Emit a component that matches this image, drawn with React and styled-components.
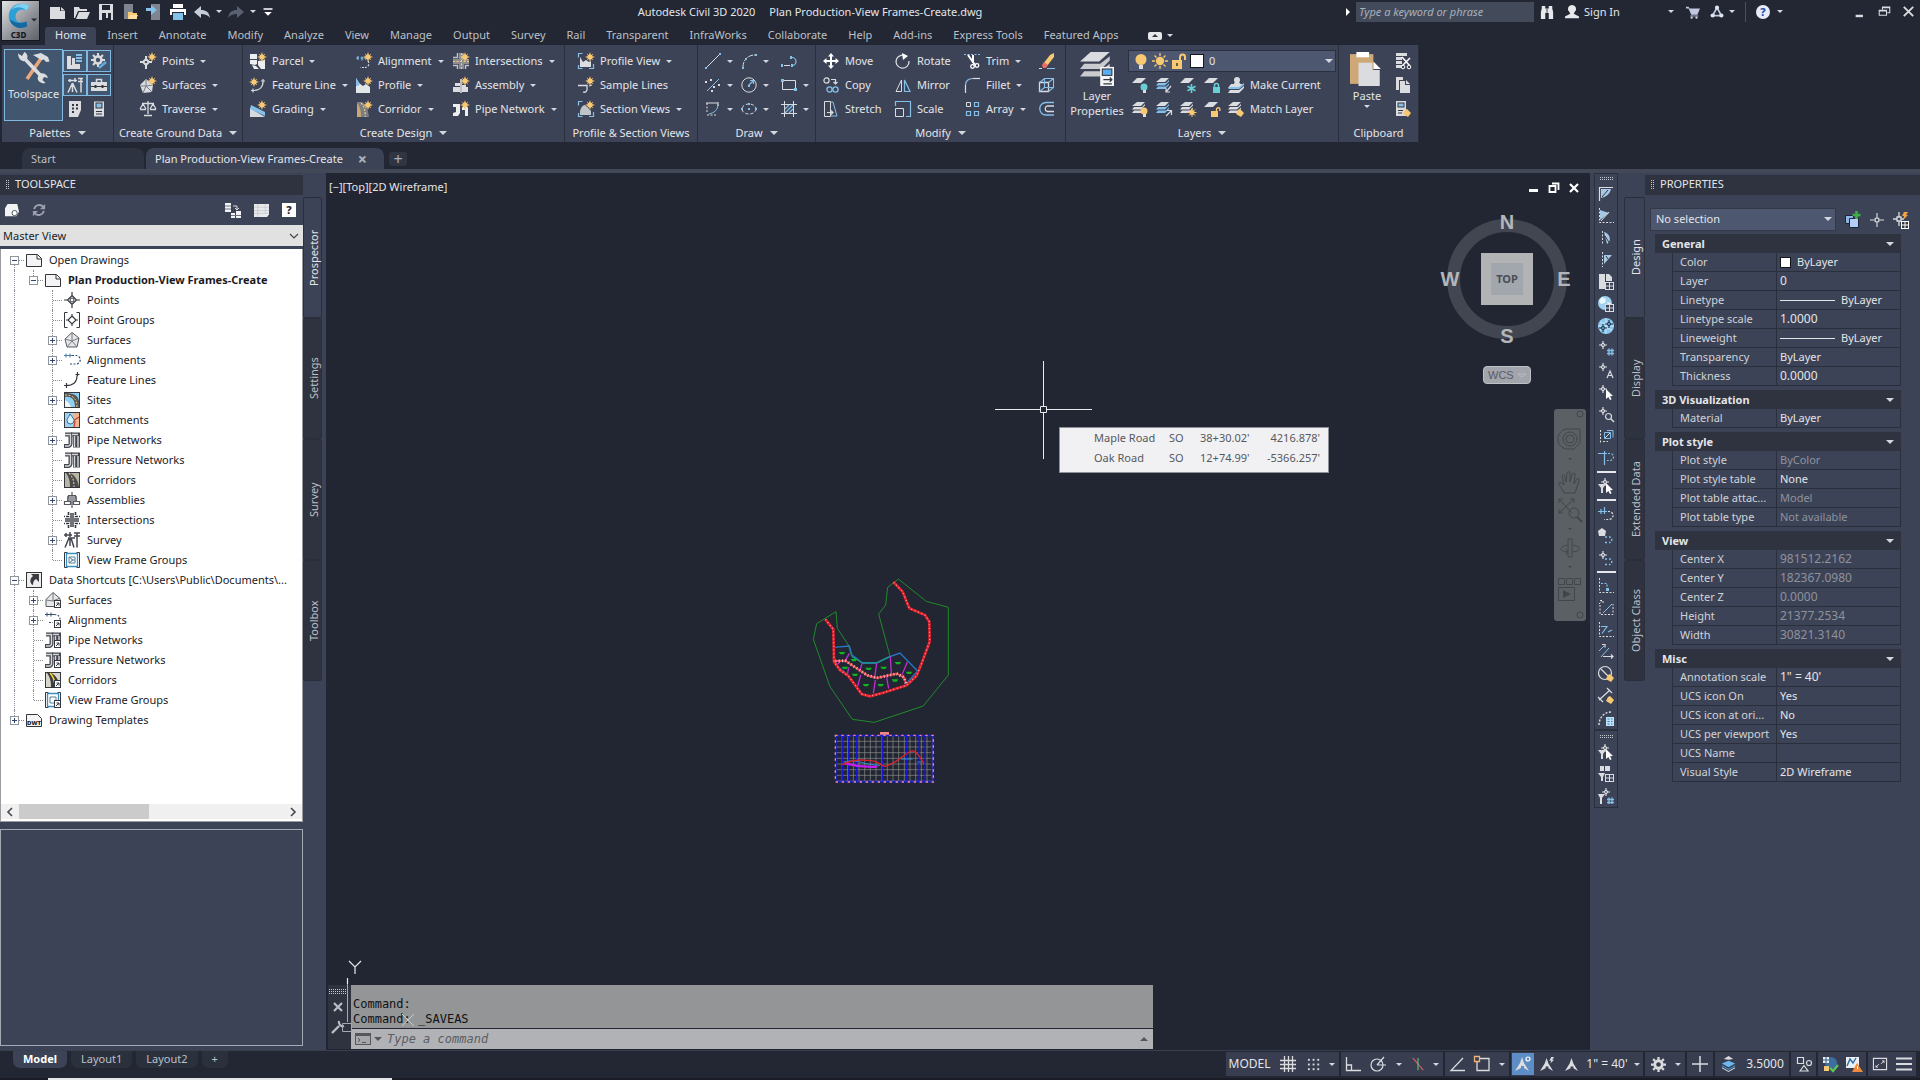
import React from "react";
import styled, { createGlobalStyle, css } from "styled-components";

const c = {
  frame: "#222733",
  canvas: "#222632",
  panel: "#3d4356",
  head: "#2f3340",
  line: "#2a2f3c",
  field: "#4d5870",
  text: "#e3e5e9",
  dim: "#bcc0c8",
  mute: "#8d929d",
  W: "#dadcdf",
  B: "#84c0ea",
  Y: "#f8c873",
  K: "#33363d",
};

const Global = createGlobalStyle`
  *, *::before, *::after { box-sizing: border-box; }
  html, body { margin: 0; background: ${c.frame}; }
  body, button, input, select, table {
    font-family: "Noto Sans", "Open Sans", sans-serif;
    font-size: 11px;
    line-height: 16px;
    color: ${c.text};
  }
  button { background: none; border: 0; padding: 0; text-align: left; white-space: nowrap; }
  ul { list-style: none; margin: 0; padding: 0; }
  svg { display: block; flex: none; overflow: visible; }
`;

/* ---------- icon drawings, 16 x 16 ---------- */
const { W, B, Y, K } = c;
const ln = (d, s = W, w = 1, extra = {}) => (
  <path d={d} fill="none" stroke={s} strokeWidth={w} {...extra} />
);
const fl = (d, f = W) => <path d={d} fill={f} />;
const dash = { strokeDasharray: "2 1.5" };
const spark = (
  <path
    d="M12 -1l1 3 2.300-1.300-1.300 2.300 3 1-3 1 1.300 2.300-2.300-1.300-1 3-1-3-2.300 1.300 1.300-2.300-3-1 3-1-1.300-2.300 2.300 1.300z"
    fill={Y}
  />
);
const shortcut = (
  <>
    <rect x="9.500" y="8.500" width="6" height="7" fill="#fff" stroke={K} />
    {ln("M11 14l3-3M11.500 11h2.500v2.500", K)}
  </>
);
const sheets = (top = W, low = W) => (
  <>
    {fl("M5 1h8l-4 4H0z", top)}
    {fl("M2 6h8l3-3v1.500L9 8.500H0z", low)}
    {fl("M2 9.500h8l3-3V8l-4 4H0z", low)}
  </>
);
const point = (x, y, s = W) => (
  <g transform={`translate(${x} ${y})`}>
    {ln("M-2 0l2-2 2 2-2 2zM0-4v2M0 2v2M-4 0h2M2 0h2", s, 1.2)}
  </g>
);
const tableMark = (
  <>
    <rect x="7.500" y="8.500" width="8" height="7" fill={c.panel} stroke={W} />
    {ln("M7.500 12h8M11.500 8.500v7")}
  </>
);
const pointer = fl("M8 5l7 7-3 .3 1.600 3-1.600.7-1.600-3L8 15z", "#fff");
const pipes = (s) => (
  <>
    {ln("M1 2.500h5.500v9a2.500 2.500 0 0 1-2.500 2.500H0", s, 4)}
    {ln("M7 2.500h7v13", s, 4)}
    {ln("M10.500 4v11.500", s, 3)}
    {ln("M1 2.500h5.500v9a2.500 2.500 0 0 1-2.500 2.500H1M14 4v11M10.500 4v11M8 2.500h6", "#d5d7dc", 1.4)}
  </>
);
const brush = fl("M10 9l2-1 4 4-3 4-5-3z", Y);
const curveMark = ln("M7 9h3M11 9h1a3 3 0 0 1 0 5.500h-1M9 14.500H6", B, 1.3, dash);

const icons = {
  newDoc: fl("M0 3h10v4h5v8H0zM11 3l4 3.500h-4z"),
  open: fl("M0 3h5l1 2h7v2H4L1 14H0zM5 8h11l-3 7H2z"),
  save: (
    <>
      {fl("M1 0h14v16H1z")}
      {fl("M4 1h8v5H4zM4 9h9v7H4z", c.frame)}
      {fl("M8 9h2v5H8z")}
    </>
  ),
  openMobile: (
    <>
      {fl("M2 0h9v15H2z", "#7e8490")}
      {fl("M6 8h4l1 1h4v6H6z", Y)}
      {fl("M8 11h8l-2 4H6z", "#ffdf9f")}
    </>
  ),
  saveMobile: (
    <>
      {fl("M5 0h9v16H5z", "#7e8490")}
      {fl("M0 4h5V1l6 5-6 5V7H0z", B)}
    </>
  ),
  print: (
    <>
      {fl("M3 0h10v4H3z", "#fff")}
      {fl("M0 5h16v6h-2V8H2v3H0z", "#fff")}
      {fl("M3 9h10v7H3z", B)}
    </>
  ),
  undo: fl("M0 8l7-6v4c5 0 8 2 9 8-2-3-5-4-9-4v4z", "#c6ccd8"),
  redo: fl("M16 8L9 2v4C4 6 1 8 0 14c2-3 5-4 9-4v4z", "#596072"),
  custom: fl("M2 3h12v2H2zM3 8h10l-5 5z", "#fff"),
  binoc: (
    <>
      {fl("M2 1h4v3h4V1h4v3l1 4v8h-5V9H6v7H1V8l1-4z", "#e6e8ec")}
      {ln("M8 4v5", c.frame)}
    </>
  ),
  user: fl("M8 0a4.500 4.500 0 0 1 3 8l-1 2 6 3v2H0v-2l6-3-1-2a4.500 4.500 0 0 1 3-8z", "#e6e8ec"),
  cart: (
    <>
      {fl("M0 2h3l1 2h12l-3 7H6L3 4H0z", "#c2c9e0")}
      {ln("M5 12.500h9", "#c2c9e0")}
      <circle cx="6.500" cy="14.500" r="1.300" fill={W} />
      <circle cx="12" cy="14.500" r="1.300" fill={W} />
    </>
  ),
  a360: (
    <>
      {ln("M8 3L3 12h10z", "#c2c9e0", 2)}
      {[[8, 3], [3, 12], [13, 12]].map(([x, y]) => (
        <circle key={x} cx={x} cy={y} r="2.400" fill="#dfe3ef" />
      ))}
    </>
  ),
  min: fl("M2 12h9v3H2z", W),
  restore: ln("M5.500 5.500v-3h9v7h-3M1.500 6.500h9v6h-9zM1 7.500h9M5 3.500h9", W, 1.3),
  close: ln("M3 3l10 10M13 3L3 13", W, 2),

  toolspace: (
    <>
      {ln("M12 2.500L4.500 13.500", "#e9a679", 1.8)}
      {fl("M7.500 1.500l4-1 3.500 2 .8 2.200-1.800.3-1-1.300-1.300.3z")}
      {ln("M3 3l9 9.500", W, 1.8)}
      {fl("M0 .8l2 1.200L3.200 0C5 .8 5.200 3 4 4.200 2.500 5.200.2 4.200 0 .8zM10.500 11c1.700-1 4 0 4.500 2l-2-.5-.8 1.500 1.600 1.500c-2 .6-4-.8-4-2.500z")}
    </>
  ),
  prospector: (
    <>
      {fl("M0 3h4v9h5v4H0z")}
      {fl("M5 5h3v6h5v5H5z")}
      {fl("M9 1h6v2H9zM9 4h6v2H9zM9 7h6v2H9z", B)}
    </>
  ),
  gear: (
    <>
      <circle cx="8" cy="8" r="4" fill="none" stroke={W} strokeWidth="3" />
      {ln("M8 0v3M8 13v3M0 8h3M13 8h3M2.300 2.300l2 2M11.700 11.700l2 2M13.700 2.300l-2 2M4.300 11.700l-2 2", W, 2.4)}
    </>
  ),
  gearTool: (
    <>
      <circle cx="7" cy="7" r="3.500" fill="none" stroke={W} strokeWidth="2.600" />
      {ln("M7 0v3M7 11v3M0 7h3M11 7h3M2 2l2 2M12 2l-2 2M4 10l-2 2", W, 2)}
      {ln("M8 15l7-6", "#5fa9df", 2.4)}
    </>
  ),
  survey: ln("M1 3.500h9M3 2v3M8 1v4M5.500 6L1 15.500M5.500 6v9M5.500 6L10 15.500M14 2v13.500M11 1.500h5M11 4.500h5", W, 1.5),
  toolbox: (
    <>
      {ln("M5.500 5V2.500h5V5", W, 1.5)}
      {fl("M0 5h16v9H0z")}
      {ln("M0 9.500h16", K)}
      {ln("M4.500 8v3M11.500 8v3", K, 2)}
    </>
  ),
  sheetSet: (
    <>
      {fl("M2 0h12v9l-3 7H2z")}
      {ln("M5 4h2M9 4h2M5 7.500h2M9 7.500h2M5 11h2", K, 2)}
    </>
  ),
  design: (
    <>
      <rect x="3" y=".5" width="10" height="15" fill={W} />
      <rect x="5" y="2" width="6" height="5" fill={B} stroke={K} />
      {ln("M5 10.500h6M5 13h6", K, 1)}
    </>
  ),
  points: (
    <>
      {ln("M6 6l3 3-3 3-3-3zM6 3v3M6 12v4M0 9h3M9 9h3", W, 2)}
      {spark}
    </>
  ),
  surfaces: (
    <>
      {fl("M6 2l7 6-1 7-9 1-3-8z")}
      {ln("M6 2v7l-6 0M6 9l6 6M6 9l-3 7M6 9l7-1", "#777c88", 1)}
      {spark}
    </>
  ),
  traverse: ln("M8 0v13M4 14.500h8M2 2.500h12M0 8.500h6M10 8.500h6M0 8l3-5 3 5M10 8l3-5 3 5", W, 1.3),
  parcel: (
    <>
      {fl("M0 1h7v5H0zM0 7h7v4l-2 1-5-1zM8 8l7-1v9h-4l-3-4zM2 12l4 1 3 3H4z", "#eceef0")}
      {spark}
    </>
  ),
  feature: (
    <>
      {ln("M3 13.500c6 0 10-3 10-9M1 13.500h3M3 11.500v4M13 2v4M11 4h4", W, 1.2)}
      <g transform="translate(-8 1)">{spark}</g>
    </>
  ),
  grading: (
    <>
      {fl("M0 7v9h15z", "#d6dadd")}
      {fl("M1 4l14 7v4L0 8z", B)}
      {spark}
    </>
  ),
  alignment: (
    <>
      {ln("M0 5h3M4.500 5h3M2 3v4M6 3.500v4M8 5h4", B, 1.2)}
      {ln("M12 8a4 4 0 0 1-3 6.500M8 14.500H4", W, 1.2, dash)}
      {spark}
    </>
  ),
  profile: (
    <>
      {fl("M0 1l3 5 4 3 3-2 4 3v6H0z", "#e1e6ea")}
      {fl("M0 1l4 6-2 2-2 0z", B)}
      {spark}
    </>
  ),
  corridor: (
    <>
      {fl("M1 1h5c5 3 6 8 7 15H3z", "#7a7d82")}
      {fl("M1 2c3 3 4 8 4 14H1z", "#c8a773")}
      {ln("M5 2c4 4 4 8 4.500 14", Y, 1.2, dash)}
      {spark}
    </>
  ),
  intersections: (
    <>
      {fl("M6 0h5v16H6zM0 6h16v5H0z", "#8b8d91")}
      {ln("M8.500 0v16M0 8.500h16", Y, 1, dash)}
      {ln("M4.500 0v4.500H0M12.500 16v-3.500H16M4.500 16v-3.500H0", "#bfc2c6", 1.5)}
      {spark}
    </>
  ),
  assembly: (
    <>
      {fl("M0 10h7v5H0zM9 10h6v5H9zM2 6h5v3H2zM9 8h4v2H9z")}
      {ln("M8 2v14", "#fff", 1.3)}
      {spark}
    </>
  ),
  pipe: (
    <>
      {fl("M0 3h7v9l-2 3H0v-3l3-1V6H0zM9 6h6v9h-3V9H9z", "#eceef0")}
      {spark}
    </>
  ),
  profileView: (
    <>
      {ln("M.5 4.500v-4h4M.5 12v3.500h4M11 15.500h4.500V11", B, 1.2)}
      {fl("M2 4l3 5 3-2 3 2 2-1v6H2z")}
      {spark}
    </>
  ),
  sampleLines: (
    <>
      {ln("M0 8.500h5M2 8.500h7v3a3 3 0 0 1-4 3.500M14 8l-3 1", W, 1.3)}
      {spark}
    </>
  ),
  sectionViews: (
    <>
      {ln("M.5 4.500v-4h4M.5 12v3.500h4M11 15.500h4.500V11", B, 1.2)}
      {fl("M2 10c1-4 3-6 5-6l6 6v4H2z", "#bfc3ca")}
      {spark}
    </>
  ),
  line: (
    <>
      {ln("M2 14L14 2")}
      {fl("M0 14h2v2H0zM14 0h2v2h-2z", B)}
    </>
  ),
  arc: (
    <>
      {ln("M2 14C2 7 7 2 14 2", W, 1, { strokeDasharray: "5 1" })}
      {fl("M1 14h2v2H1zM4 5h2v2H4zM14 1h2v2h-2z", B)}
    </>
  ),
  polyline: (
    <>
      {ln("M3 12.500h6", W)}
      {ln("M11 12.500a4 4 0 0 0 0-8", B, 1.2)}
      {fl("M0 11h2v3H0zM10 11h2v3h-2zM9 3h2v3H9z", B)}
    </>
  ),
  lineCreate: (
    <>
      {ln("M2 14L14 2", B)}
      {fl("M0 4h2v2H0zM5 2h2v2H5zM8 9h2v2H8zM13 7h2v2h-2zM6 13h2v2H6z")}
    </>
  ),
  circle: (
    <>
      <circle cx="8" cy="8" r="7.200" fill="none" stroke={W} />
      {ln("M7 9l5-5M9 3.500h3.500V7", B, 1.2)}
      {fl("M7 8h2v2H7z", B)}
    </>
  ),
  rect: (
    <>
      {ln("M1.500 3.500h13v9h-13z")}
      {fl("M0 2h3v3H0zM13 11h3v3h-3z", B)}
    </>
  ),
  curve: (
    <>
      {ln("M2 2v10M2 14h9", W, 1, dash)}
      {ln("M13 3c0 6-4 9-9 10", B)}
      {ln("M1 2h12M13 1v4", W)}
    </>
  ),
  ellipse: (
    <>
      <ellipse cx="8" cy="8" rx="7" ry="5" fill="none" stroke={W} strokeDasharray="3 2" />
      {fl("M7 7h2v2H7zM0 7h2v2H0zM14 7h2v2h-2zM7 2h2v2H7z", B)}
    </>
  ),
  hatch: (
    <>
      {ln("M3.500 0v16M12.500 0v16M0 3.500h16M0 12.500h16")}
      {ln("M4 8l4-4M4 12l8-8M8 12l4-4", B, 1.3)}
    </>
  ),
  move: fl("M8 0l3 3.500H9V7h3.500V5L16 8l-3.500 3V9H9v3.500h2L8 16l-3-3.500h2V9H3.500v2L0 8l3.500-3v2H7V3.500H5z", "#fff"),
  copy: (
    <>
      <circle cx="3.500" cy="3.500" r="2.600" fill="none" stroke={W} strokeWidth="1.200" />
      {ln("M8 2.500h4.500V7M10.500 5l2 2 2-2", W, 1.2)}
      <circle cx="6.500" cy="12.500" r="2.600" fill="none" stroke={B} strokeWidth="1.300" />
      <circle cx="12.500" cy="12.500" r="2.600" fill="none" stroke={B} strokeWidth="1.300" />
    </>
  ),
  stretch: (
    <>
      {ln("M1.500.500h6v15h-6z")}
      {ln("M8 1h2l4 14H8", B)}
      {ln("M4 11.500h6M8 9.500l2 2-2 2", W, 1.2)}
    </>
  ),
  rotate: (
    <>
      {ln("M11.500 3.500A6.500 6.500 0 1 0 14 8", W, 1.3)}
      {fl("M7 0l6 3-5 4z", "#fff")}
    </>
  ),
  mirror: (
    <>
      {ln("M1 14.500h5.500V3z")}
      {ln("M9.500 3v11.500H15z", B, 1.2)}
    </>
  ),
  scale: (
    <>
      {ln("M.5 5V.500h15v15H11", B, 1.2)}
      {ln("M.5 7.500h8v8h-8z")}
    </>
  ),
  trim: (
    <>
      {ln("M0 1.500h16", B, 1, dash)}
      {ln("M4 2l7 10M9 2v8", "#fff", 2)}
      <circle cx="8.500" cy="13.500" r="1.800" fill="none" stroke="#fff" strokeWidth="1.300" />
      <circle cx="13" cy="12.500" r="1.800" fill="none" stroke="#fff" strokeWidth="1.300" />
    </>
  ),
  fillet: (
    <>
      {ln("M1.500 16V8", W, 1.2)}
      {ln("M1.500 8c0-4 3-6.500 7-6.500", B, 1.2)}
      {ln("M8.500 1.500H16", W, 1.2)}
    </>
  ),
  array: (
    <>
      {ln("M2.500 1.500h4v4h-4z")}
      {ln("M10.500 1.500h4v4h-4zM2.500 10.500h4v4h-4zM10.500 10.500h4v4h-4z", B, 1.2)}
    </>
  ),
  erase: (
    <>
      {fl("M15 0v4L8 13l-4-2 7-9z", Y)}
      {fl("M5 9l4 3-2 3H4l-1-3z", "#ef6a63")}
      {ln("M0 15.500h3", W)}
      {ln("M8 15.500h8", B)}
    </>
  ),
  explode: (
    <>
      {ln("M.5 5.500h9v9h-9z", W, 1.3)}
      {ln("M.5 5.500l5-4h9v9l-5 4M9.500 5.500l5-4M5.500 1.500v9h9M.5 14.500l5-4", B, 1.1)}
    </>
  ),
  offset: (
    <>
      {ln("M15 1.500H7a6 6 0 0 0 0 12.500h8", B, 1.3)}
      {ln("M15 5H8a3 3 0 0 0 0 5.500h7", W, 1.3)}
    </>
  ),
  layerProps: (
    <>
      {fl("M5 0h9l-5 4.500H0z")}
      {fl("M2 5.500h7.500L14 2v2L10 8H0z", "#c9cbce")}
      {fl("M2 9h7.500L14 5.500v2L10 11.500H0z", "#c9cbce")}
      <rect x="9.500" y="7" width="6.500" height="9" fill="#f4f5f6" />
      <rect x="10.500" y="8" width="4.500" height="3" fill="#59aef0" stroke={K} strokeWidth=".500" />
      {ln("M11 13h4M14 12l1 1-1 1M15 15h-4", K, 0.6)}
    </>
  ),
  bulb: (
    <>
      <circle cx="8" cy="6.500" r="5.500" fill={Y} />
      {fl("M6 12h4v4H6z", W)}
    </>
  ),
  sun: (
    <>
      <circle cx="8" cy="8" r="4.200" fill={Y} />
      {ln("M8 0v3M8 13v3M0 8h3M13 8h3M2.500 2.500l2 2M11.500 11.500l2 2M13.500 2.500l-2 2M4.500 11.500l-2 2", Y, 1.3)}
    </>
  ),
  unlock: (
    <>
      {fl("M1 7h10v9H1z", Y)}
      {ln("M9 7V4a2.500 2.500 0 0 1 5 0v3", Y, 2)}
      {ln("M6 10v3", K, 1.5)}
    </>
  ),
  layOff: (
    <>
      {fl("M5 1h9L9 6H0z")}
      <circle cx="12" cy="10" r="3.500" fill="#68cfd4" />
      {fl("M11 13h3v3h-3z")}
    </>
  ),
  layIso: (
    <>
      {sheets(W, B)}
      {ln("M15 9l-5 6M10 11v4h4", W, 1.2)}
    </>
  ),
  layFreeze: (
    <>
      {fl("M5 1h9L9 6H0z")}
      {ln("M11.500 7v9M7.500 9.300l8 4.500M15.500 9.300l-8 4.500", "#68cfd4", 1.6)}
    </>
  ),
  layLock: (
    <>
      {fl("M5 1h9L9 6H0z")}
      {fl("M9 10h7v6H9z", "#68cfd4")}
      {ln("M10.500 10V8.500a2 2 0 0 1 4 0V10", "#68cfd4", 1.5)}
    </>
  ),
  makeCurrent: (
    <>
      {fl("M3 7h12l-4 4H0z", W)}
      {fl("M2 10h9l5-4v2l-5 4H0z", B)}
      {fl("M2 13h9l5-4v2l-5 5H0z", W)}
      <circle cx="9" cy="3" r="3" fill={W} />
      {fl("M5 8l2-3h4l2 3z")}
    </>
  ),
  layOn: (
    <>
      {sheets()}
      <circle cx="12" cy="10" r="3.500" fill={Y} />
      {fl("M11 13h3v3h-3z")}
    </>
  ),
  layUniso: (
    <>
      {sheets(W, B)}
      {ln("M10 15l5-5M11 9.500h4.500V14", W, 1.2)}
    </>
  ),
  layThaw: (
    <>
      {sheets()}
      <circle cx="12" cy="11.500" r="2.500" fill={Y} />
      {ln("M12 7v9M7.500 11.500h9M9 8.500l6 6M15 8.500l-6 6", Y, 1)}
    </>
  ),
  layUnlock: (
    <>
      {fl("M5 1h9L9 6H0z")}
      {fl("M7 10h7v6H7z", Y)}
      {ln("M12.500 10V8.500a1.700 1.700 0 0 1 3.400 0V10", Y, 1.4)}
    </>
  ),
  matchLayer: (
    <>
      {sheets()}
      {brush}
    </>
  ),
  paste: (
    <>
      {fl("M0 1h11v14H0z", "#cfa877")}
      {fl("M3 0h6v2.500H3z", "#fff")}
      {fl("M4 5h6.500v3.500H14V16H4z")}
      {fl("M11 4.500L14.500 8H11z", "#fff")}
    </>
  ),
  cut: (
    <>
      {fl("M1 0h11v3H1zM1 4h6v3H1zM1 8h6v3H1zM1 12h6v3H1z")}
      {ln("M7 4l8 9M15 5l-8 8", "#fff", 1.5)}
      <circle cx="8" cy="14" r="1.800" fill={c.panel} stroke="#fff" />
      <circle cx="14" cy="14" r="1.800" fill={c.panel} stroke="#fff" />
    </>
  ),
  copyClip: (
    <>
      {fl("M1 0h7v3H4v10H1z")}
      {fl("M5 4h5v4h5v8H5zM11 3l4 4h-4z")}
    </>
  ),
  matchProp: (
    <>
      <rect x="1" y="0" width="10" height="15" fill={W} />
      <rect x="3" y="2" width="6" height="4" fill={B} stroke={K} />
      {ln("M3 9.500h5M3 12h4", K)}
      {brush}
    </>
  ),

  tsNew: (
    <>
      {fl("M3 1h11l2 9-3 5H0V6z", "#f2f3f4")}
      <circle cx="11" cy="11.500" r="3" fill="#fff" stroke={c.panel} />
    </>
  ),
  refresh: (
    <>
      {ln("M2.500 7A6 6 0 0 1 13 4.500M13.500 9A6 6 0 0 1 3 11.500", "#9ba0ab", 2.2)}
      {fl("M15 1v6H9zM1 15V9h6z", "#9ba0ab")}
    </>
  ),
  tsTree: (
    <>
      {fl("M0 1h6v9H0zM6 11h4v5H6zM11 9h5v7h-5z", "#f2f3f4")}
      {ln("M0 4h6M0 7h6M6 13.500h10", "#6f7482")}
      {ln("M8 4h4v4M10 6l2 2 2-2", W)}
    </>
  ),
  tsPano: (
    <>
      {fl("M0 1h16v11l-2 3H0z", "#e8e9eb")}
      {ln("M0 4.500h16M0 8h16M0 11h16M4 1v14M12 1v10", "#bfc3c9", 0.7)}
    </>
  ),
  doc: (
    <>
      <path d="M.5 2.500h11l4 4v8H.5z" fill="#f4f4f5" stroke={K} />
      {ln("M11 2.500v4.500h4.500", K)}
    </>
  ),
  tPoint: (
    <>
      {ln("M8 3.500l4.500 4.500-4.500 4.500-4.500-4.500zM8 0v4M8 12v4M0 8h4M12 8h4", K, 1.2)}
      <circle cx="8" cy="8" r="2" fill="#fff" stroke={K} />
    </>
  ),
  tPointGroup: (
    <>
      {ln("M3.500.500h-3v15h3M12.500.500h3v15h-3", K)}
      {ln("M8 4l4 4-4 4-4-4zM8 2v3M8 11v3M2 8h3M11 8h3", K, 1.2)}
    </>
  ),
  tSurface: (
    <>
      <path d="M8 .5l7 5.500-2 9H3L1 7z" fill="#e6e7e9" stroke="#55585f" />
      {ln("M8 .5V9M1 7l7 2 7-3M3 15l5-6 5 6", "#777b83")}
    </>
  ),
  tAlign: (
    <>
      {ln("M0 3.500h8M2 1.500v4M6 1.500v4", "#4c7ea9", 1)}
      {ln("M8 3.500h4a4 4 0 0 1 0 8.500H5", "#38506a", 1.2, dash)}
    </>
  ),
  tFeature: ln("M2 13.500c7 0 11-3 11-10M0 13.500h4M2.500 11v5M13.500 0v4M11.500 2.500h4", K, 1.2),
  tSites: (
    <>
      <rect x=".5" y=".5" width="15" height="15" fill="#8fd0f2" stroke={K} />
      {fl("M1 5c7-1 10 3 10 10h4V9C14 3 9 1 1 1z", "#55575a")}
      {ln("M1 3c8 0 12 4 12 12", Y, 1, dash)}
      {fl("M1 8l4 3 2 4H1z", "#f2f3f4")}
    </>
  ),
  tCatch: (
    <>
      <rect x=".5" y=".5" width="15" height="15" fill="#9fd4f0" stroke={K} />
      {fl("M9 1h6v14H9l1-5-2-2z", "#f0b48f")}
      {ln("M9 9l6-4M11 9l-1 6", "#c8422f", 1.3)}
      <path d="M6 2c3 4 4 5 4 6.500a3.500 3.500 0 0 1-7 0C3 7 4 6 6 2z" fill="#d9f0fc" stroke="#2a6d9c" />
    </>
  ),
  tPipe: pipes("#43464d"),
  tPipeS: (
    <>
      {pipes("#43464d")}
      {shortcut}
    </>
  ),
  tCorr: (
    <>
      <rect x=".5" y=".5" width="15" height="15" fill="#b9b6a6" stroke={K} />
      {fl("M2 1h4c6 3 8 8 9 14H6C6 9 5 5 2 1z", "#4a4c50")}
      {ln("M5 1c4 4 5 8 5 14", Y, 1.1, dash)}
    </>
  ),
  tCorrS: (
    <>
      <rect x=".5" y=".5" width="15" height="15" fill="#d8d6c8" stroke={K} />
      {fl("M2 1h4c6 3 8 8 9 14H6C6 9 5 5 2 1z", "#3c3e42")}
      {ln("M5 1c4 4 5 8 5 14", "#ffd728", 1.6)}
      {shortcut}
    </>
  ),
  tAssembly: (
    <>
      {fl("M3 4h4v6H3zM9 4h4v6H9z", "#9a9da3")}
      {ln("M8 0v16M3.500 9.500l1-6h7l1 6M.5 9.500h6v3h-6zM9.500 9.500h6v3h-6z", "#55585f", 1.2)}
    </>
  ),
  tInter: (
    <>
      {fl("M6 1h4v5h5v4h-5v5H6v-5H1V6h5z", "#6f7277")}
      {ln("M4.500 0v4.500H0M11.500 0v4.500H16M4.500 16v-4.500H0M11.500 16v-4.500H16", K, 1.6, { strokeDasharray: "3 1" })}
    </>
  ),
  tSurvey: ln("M0 3h8M2 1v4M6 0v5M4 6h7M5 6L1 15.500M6 6v8M7 6l3 9.500M13 1v14.500M10 1h6M10 4h6", "#44474e", 1.5),
  tView: (
    <>
      {ln("M3.500.500h-3v15h3M12.500.500h3v15h-3", K)}
      {ln("M2.500 1.500h11v13h-11z", "#3e8fc1", 1.3)}
      {ln("M5 5h6v6H5zM5 5l4 3-4 3M7 8h4", "#5d7f98", 1)}
    </>
  ),
  tViewS: (
    <>
      {ln("M3.500.500h-3v15h3M12.500.500h3v15h-3", K)}
      {ln("M2.500 1.500h11v13h-11z", "#3e8fc1", 1.3)}
      {ln("M5 5h6v6H5z", "#5d7f98", 1)}
      {shortcut}
    </>
  ),
  tShort: (
    <>
      <rect x=".5" y=".5" width="15" height="15" fill="#eee" stroke="#333" />
      {fl("M5 2h8v8l-3-3c-2 1-3 3-3 6-3-1-4-6 0-9z", "#3a3c41")}
    </>
  ),
  tSurfaceS: (
    <>
      <path d="M8 .5l7 6v8H1v-7z" fill="#e6e7e9" stroke="#55585f" />
      {ln("M8 .5V9M1 8l7 1 7-3", "#777b83")}
      {shortcut}
    </>
  ),
  tAlignS: (
    <>
      {ln("M0 2.500h9M2 .5v4M6 .5v4", "#38506a", 1)}
      {ln("M9 2.500c4 0 6 2 6 5M4 10.500h4", "#38506a", 1.2, dash)}
      {shortcut}
    </>
  ),
  tDwt: (
    <>
      <path d="M.5 2.500h11l4 4v8H.5z" fill="#f4f4f5" stroke={K} />
      <text x="8" y="13" textAnchor="middle" fontSize="6" fontWeight="800" fill="#111">DWT</text>
    </>
  ),

  rCorner: (
    <>
      {ln("M1.500 15V1.500H15", W, 1.2)}
      {fl("M3 3h10c-1 5-5 8-10 9z", "#a5c9e4")}
      {ln("M4 11l6-7", K)}
    </>
  ),
  rAngle: (
    <>
      {ln("M1.500 0v14.500H16", W, 1, dash)}
      {fl("M2 2l9 3-9 7z", "#a5c9e4")}
      {ln("M3 13L11 4", W)}
    </>
  ),
  rArcL: (
    <>
      {ln("M4.500 1v14", W, 1, dash)}
      {fl("M6 2c6 1 8 9 3 12z", "#a5c9e4")}
      {ln("M7 6l5 8", K, 1)}
    </>
  ),
  rWedge: (
    <>
      {ln("M4.500 0v15", W, 1, dash)}
      {fl("M6 3h8L6 12z", "#a5c9e4")}
      {ln("M8 4l2 3", K)}
    </>
  ),
  rSheet: (
    <>
      {fl("M1 0h6v15H1zM8 0h3l3 3v4H8z")}
      {tableMark}
    </>
  ),
  rGlobeT: (
    <>
      <circle cx="7" cy="7" r="7" fill="#9fd0f0" />
      {fl("M4 1l4 2-1 4-4 1-2-3zM9 6l4 1-2 4z", "#e9f6fd")}
      {tableMark}
    </>
  ),
  rGlobe: (
    <>
      <circle cx="8" cy="8" r="8" fill="#8cc8ec" />
      {ln("M8 0v16M0 8h16M2 4c4 2 8 2 12 0M2 12c4-2 8-2 12 0", "#d5ecfa", 0.8)}
      {point(5, 10, "#1f3a55")}
      {point(11, 6, "#1f3a55")}
    </>
  ),
  rPtGrid: (
    <>
      {point(5, 5)}
      {ln("M9 10.500h7M9 13.500h7M11 8.500v7M14 8.500v7", B, 1.3)}
    </>
  ),
  rPtA: (
    <>
      {point(5, 5)}
      {ln("M9 16l3-7 3 7M10 13.500h4", W, 1.2)}
    </>
  ),
  rPtSel: (
    <>
      {point(5, 5)}
      {pointer}
    </>
  ),
  rPtZoom: (
    <>
      {point(5, 5)}
      <circle cx="10.500" cy="10.500" r="3" fill="none" stroke={W} strokeWidth="1.200" />
      {ln("M13 13l3 3", W, 1.4)}
    </>
  ),
  rSel: (
    <>
      {ln("M2.500 2v13M5 13.500h5", W, 1, dash)}
      {ln("M6.500 4.500h6v6h-6zM9 2.500h6v7", B)}
      {ln("M7 10l5-5", W)}
    </>
  ),
  rProf: (
    <>
      {ln("M0 3.500h9M6.500 1v14", B, 1.2)}
      {ln("M10 3.500h2a3.500 3.500 0 0 1 0 7H9", B, 1.2, dash)}
    </>
  ),
  rFilter: (
    <>
      {fl("M0 6h8l-3 4v5H3v-5z")}
      {point(7, 4)}
      {pointer}
    </>
  ),
  rCurve: (
    <>
      {ln("M0 5.500h9M3 3v5M6.500 1v7", B, 1.2)}
      {ln("M10 5.500h1a4 4 0 0 1 0 8H6", W, 1.2, dash)}
    </>
  ),
  rSurfC: (
    <>
      {fl("M4 0l4 3-1 5H1L0 3z")}
      {curveMark}
    </>
  ),
  rPtC: (
    <>
      {point(5, 5)}
      {curveMark}
    </>
  ),
  rD1: (
    <>
      {ln("M1.500 0v14.500H16", W, 1, dash)}
      {ln("M3 5.500h6v6", B, 1.2, dash)}
      {fl("M8 10h3v3H8z", B)}
    </>
  ),
  rD2: (
    <>
      {ln("M2 5v9.500h13V4M1 4l3-3M2 .5h3v3", W, 1, dash)}
      {ln("M5 13l9-9", B)}
    </>
  ),
  rD3: (
    <>
      {ln("M1.500 0v14.500H16", W, 1, dash)}
      {ln("M3 4.500h6l-5 7M10 10l4-2", B, 1.1)}
    </>
  ),
  rD4: (
    <>
      {ln("M1 7l5-5M3 13L11 4", B)}
      {ln("M5 12.500h10M13 10.500l2 2-2 2M4 .5h3v3", W, 1.2)}
    </>
  ),
  rD5: (
    <>
      <circle cx="7" cy="7" r="6.500" fill="none" stroke={W} strokeWidth="1.200" />
      {ln("M3 3l7 7", W, 1.2)}
      {brush}
    </>
  ),
  rD6: (
    <>
      {ln("M1 12L12 2M0 9l5 5M9 0l5 5", W, 1.2)}
      {brush}
    </>
  ),
  rD7: (
    <>
      {ln("M1 15C1 8 6 2 13 2", W, 1.4, dash)}
      {fl("M8 7h8v9H8z", "#bfe2f7")}
      {ln("M9.500 9h5M9.500 11.500h5M9.500 14h5", "#2f7fb5", 1, dash)}
    </>
  ),
  rF2: (
    <>
      {fl("M2 0h4v5H2zM7 0h5v5H7zM0 7h7l-2 4v4H3v-4z")}
      {tableMark}
    </>
  ),
  rF3: (
    <>
      {fl("M0 6h7l-3 4v6H2v-6z")}
      {point(8, 4)}
      {ln("M9 11.500h7M9 14.500h7M11 9.500v6.500M14 9.500v6.500", B, 1.3)}
    </>
  ),

  pickAdd: (
    <>
      <path d="M.5 3.500h8v8h-8z" fill="#8fb3e2" stroke="#1d2638" />
      <path d="M4.500 6.500h9v9h-9z" fill="#b4cdf2" stroke="#1d2638" />
      {ln("M11.500-1v8M7.500 3h8", "#3fae45", 2.6)}
    </>
  ),
  pickObj: ln("M8 0v6M8 10v6M0 8h6M10 8h6M6 6h4v4H6z", W, 1.3),
  quickSel: (
    <>
      {ln("M6 0v5M6 9v5M0 7h4M8 7h3M4 5h4v4H4z", W, 1.3)}
      {fl("M11 0h4l-2 3h2l-5 5 1-4H9z", "#f4a340")}
      <rect x="8.500" y="9.500" width="7" height="7" fill={K} stroke="#fff" />
      {ln("M8.500 13h7M12 9.500v7", "#fff")}
    </>
  ),

  sGrid: ln("M4.500 0v16M8.500 0v16M12.500 0v16M0 4.500h16M0 8.500h16M0 12.500h16", W, 1.3),
  sSnap: (
    <>
      {[2, 7, 12].map((y) => [1, 6, 11].map((x) => <rect key={`${x}-${y}`} x={x} y={y} width="2" height="2" fill={W} />))}
    </>
  ),
  sOrtho: ln("M1.500 1v13.500H16M1.500 9h5v5.500", W, 1.3),
  sPolar: (
    <>
      <circle cx="7" cy="9" r="6" fill="none" stroke={W} strokeWidth="1.200" />
      {ln("M7 9h9M7 9l7-8", W, 1.2)}
    </>
  ),
  sIso: (
    <>
      {ln("M2 1l12 14", "#d5606a", 1.3)}
      {ln("M8 1v14", "#5fbf83", 1.3)}
    </>
  ),
  sTrack: ln("M14 2L2 14.500h14", W, 1.3),
  sSnap2: (
    <>
      {ln("M3 5v9.500h12v-12H6", W, 1.3)}
      {ln("M.5.500h5v5h-5z", "#eeb27c", 1.3)}
    </>
  ),
  sAnno: (
    <>
      {fl("M7 1l2 6 5 8-5-3v-2H6v2l-6 3 5-8z")}
      <circle cx="13" cy="3" r="2" fill="none" stroke="#fff" strokeWidth="1.200" />
    </>
  ),
  sAnno2: (
    <>
      {fl("M7 1l2 6 5 8-5-3v-2H6v2l-6 3 5-8z")}
      {fl("M12 0h3l-2 3h2l-4 4 1-3h-2z")}
    </>
  ),
  sAnno3: fl("M8 1l2 6 5 8-5-3v-2H7v2l-6 3 5-8z"),
  sPlus: ln("M8 0v16M0 8h16", W, 1.5),
  sLayers: (
    <>
      {fl("M8 4l7 3-7 4-7-4z", "#6db8ec")}
      {fl("M1 8.500l7 4 7-4V10l-7 4-7-4z", "#3d84ba")}
      {fl("M1 12l7 4 7-4v-1l-7 4-7-4zM3 2l5-3 5 3-5 1z", W)}
    </>
  ),
  sShapes: (
    <>
      {ln("M1.500 1.500h6v6h-6zM4 15l4-5.500 4 5.500z", W, 1.2)}
      <circle cx="13" cy="7" r="2.500" fill="none" stroke={W} strokeWidth="1.200" />
    </>
  ),
  sHw: (
    <>
      <circle cx="9" cy="7" r="6" fill="#3c6f9e" />
      {fl("M1 1h6v6H1z", "#eceff2")}
      {ln("M4 1v6M1 4h6", "#2d5f8a")}
      {fl("M2 10h5v5H2z", Y)}
      {ln("M8 12l3 3 5-6", "#5cc45a", 2.2)}
    </>
  ),
  sWarn: (
    <>
      {fl("M0 1h13v11H0z", "#eceff2")}
      {ln("M1 10l3-7 3 4 3-5", "#2d6ea3", 1.4)}
      {fl("M11 7l6 9H6z", "#ef8a3c")}
      {ln("M11.500 10v3", "#fff")}
    </>
  ),
  sClean: (
    <>
      {ln("M.5 1.500h15v13H.5z", W, 1.3)}
      {fl("M10 4h3v3zM3 9v3h3z", "#fff")}
      {ln("M12 5L9 8M4 11l3-3", W)}
    </>
  ),
  sMenu: ln("M0 2.500h16M0 8h16M0 13.500h16", W, 2.2),
};

const Ico = ({ n, s = 16, w, h }) => (
  <svg width={w || s} height={h || s} viewBox="0 0 16 16" aria-hidden="true">
    {icons[n]}
  </svg>
);

const Caret = styled.span`
  flex: none;
  width: 0;
  height: 0;
  border: ${(p) => (p.$big ? 4 : 3)}px solid transparent;
  border-top-color: #d3d7e0;
  border-bottom: 0;
`;

/* ---------- header ---------- */
const App_ = styled.div`
  min-height: 100vh;
  display: flex;
  flex-direction: column;
  overflow: hidden;
`;
const Header = styled.header`
  display: grid;
  grid-template: 27px 18px / 45px 1fr;
`;
const Logo = styled.button`
  grid-row: 1 / 3;
  margin: 0 5px 4px 1px;
  border: 1px solid #15171d;
  background: linear-gradient(135deg, #e2e3e5, #8b8e94 60%, #5f6268);
  position: relative;
  svg { width: 100%; height: 100%; }
`;
const LogoName = styled.span`
  position: absolute;
  left: 0;
  right: 4px;
  bottom: 0;
  font-size: 8px;
  line-height: 10px;
  font-weight: 800;
  color: #17191f;
  text-align: center;
`;
const TitleBar = styled.div`
  display: flex;
  align-items: center;
  height: 23px;
`;
const Quick = styled.div`
  width: 235px;
  display: flex;
  align-items: center;
  padding-left: 5px;
  gap: 8px;
  button { display: block; }
  > span { margin: 0 -2px; }
`;
const Title = styled.div`
  flex: 1;
  display: flex;
  justify-content: center;
  gap: 14px;
  white-space: nowrap;
`;
const Account = styled.div`
  width: 580px;
  display: grid;
  grid-template-columns: 16px 178px 26px 24px 82px 10px 34px 14px 16px 10px 26px 8px 1fr 24px 24px 24px;
  align-items: center;
  justify-items: center;
  button { display: block; }
`;
const Search = styled.input`
  width: 100%;
  height: 20px;
  padding: 0 3px;
  border: 0;
  background: #434b5b;
  font-style: italic;
  &::placeholder { color: #aab0bb; opacity: 1; }
`;
const RightArrow = styled.span`
  border: 4px solid transparent;
  border-left-color: #fff;
  border-right: 0;
`;
const SignIn = styled.a`
  justify-self: start;
  color: ${c.text};
  text-decoration: none;
`;
const Divider = styled.span`
  width: 1px;
  height: 20px;
  background: #4a4f5b;
`;
const Help = styled.button`
  width: 14px;
  height: 14px;
  border-radius: 50%;
  background: #e6ecf8;
  color: #1f4fa8;
  font-weight: 800;
  line-height: 14px;
  text-align: center;
`;
const Tabs = styled.nav`
  display: flex;
  align-items: center;
  gap: 1px;
`;
const Tab = styled.button`
  height: 18px;
  padding: 0 10px 2px;
  color: ${(p) => (p.$on ? c.text : c.dim)};
  background: ${(p) => (p.$on ? c.panel : "none")};
  border-radius: 3px 3px 0 0;
`;
const RibbonToggle = styled.button`
  display: flex;
  align-items: center;
  gap: 5px;
  padding-bottom: 1px;
  margin-left: 18px;
`;
const Pill = styled.span`
  width: 14px;
  height: 8px;
  border-radius: 2px;
  background: #e6e8ec;
  display: grid;
  place-items: center;
  &::after { content: ""; border: 3px solid transparent; border-bottom-color: ${K}; border-top: 0; }
`;

/* ---------- ribbon ---------- */
const Ribbon = styled.div`
  height: 97px;
  display: flex;
  padding-left: 2px;
`;
const Panel = styled.section`
  flex: none;
  width: ${(p) => p.$w}px;
  display: flex;
  flex-direction: column;
  background: ${c.panel};
  border-right: 1px solid ${c.line};
`;
const PanelBody = styled.div`
  flex: 1;
  display: grid;
  grid-template-columns: ${(p) => p.$cols};
  grid-template-rows: repeat(3, 24px);
  grid-auto-flow: column;
  align-items: center;
  padding: 4px 0 0 ${(p) => p.$l || 0}px;
`;
const PanelName = styled.button`
  height: 18px;
  display: flex;
  align-items: center;
  justify-content: center;
  gap: 7px;
`;
const Tool = styled.button`
  display: flex;
  align-items: center;
  gap: 6px;
`;
const Square = styled.button`
  width: 24px;
  height: 22px;
  display: grid;
  place-items: center;
  ${(p) => p.$on && css`
    background: #42566f;
    border: 1px solid #7fb9e2;
  `}
`;
const Big = styled.button`
  grid-row: span 3;
  align-self: stretch;
  display: flex;
  flex-direction: column;
  align-items: center;
  padding-top: 3px;
  gap: 2px;
  text-align: center;
  line-height: 15px;
  white-space: normal;
  ${(p) => p.$on && css`
    background: #42566f;
    border: 1px solid #7fb9e2;
    padding-top: 2px;
  `}
`;
const Layers = styled.div`
  display: grid;
  grid-template-rows: repeat(3, 24px);
  grid-row: span 3;
  align-items: center;
`;
const LayerRow = styled.div`
  display: flex;
  align-items: center;
  gap: 8px;
  padding-left: 4px;
`;
const LayerCombo = styled.div`
  height: 22px;
  display: flex;
  align-items: center;
  gap: 3px;
  padding: 0 2px 0 4px;
  background: ${c.field};
  border: 1px solid #2b3040;
  margin-right: 2px;
`;
const Swatch = styled.span`
  flex: none;
  width: ${(p) => p.$s}px;
  height: ${(p) => p.$s}px;
  background: #fff;
  border: 1px solid #15171d;
`;
const PlainSelect = styled.select`
  appearance: none;
  flex: 1;
  min-width: 0;
  border: 0;
  background: none;
  padding: 0 2px;
`;

/* ---------- file tabs ---------- */
const Files = styled.nav`
  height: 27px;
  display: flex;
  align-items: flex-end;
  padding-left: 22px;
  gap: 2px;
`;
const FileTab = styled.div`
  width: ${(p) => p.$w}px;
  height: 21px;
  padding: 0 17px 0 9px;
  display: flex;
  align-items: center;
  justify-content: space-between;
  border-radius: 8px 8px 0 0;
  background: ${(p) => (p.$on ? c.panel : "#2e3341")};
  button { color: ${(p) => (p.$on ? c.text : c.dim)}; }
`;
const CloseX = styled.button`
  font-size: 16px;
  font-weight: 700;
  opacity: 0.7;
`;
const AddTab = styled.button`
  width: 18px;
  height: 14px;
  margin: 0 0 3px 3px;
  border-radius: 3px;
  background: #303544;
  color: #a8aeb9;
  font-size: 16px;
  line-height: 14px;
  text-align: center;
`;

/* ---------- main ---------- */
const Main = styled.main`
  flex: 1;
  display: flex;
  background: ${c.panel};
  border-top: 4px solid #424855;
`;
const LeftDock = styled.aside`
  flex: none;
  width: 326px;
  display: grid;
  grid-template-columns: 303px 20px;
  padding: 2px 0 4px;
`;
const Column = styled.div`
  display: flex;
  flex-direction: column;
  min-width: 0;
`;
const PaletteHead = styled.h2`
  margin: 0;
  height: 20px;
  display: flex;
  align-items: center;
  gap: 6px;
  padding: 0 0 2px 6px;
  background: ${c.head};
  font-size: 11px;
  font-weight: 400;
`;
const Grip = styled.span`
  width: ${(p) => p.$w || 3}px;
  height: ${(p) => p.$h || 9}px;
  background:
    repeating-linear-gradient(180deg, transparent 0 1px, ${(p) => p.$bg || c.head} 1px 2px),
    repeating-linear-gradient(90deg, #c3c8d2 0 1px, transparent 1px 2px);
`;
const TsBar = styled.div`
  height: 30px;
  display: flex;
  align-items: center;
  gap: 13px;
  padding: 0 7px 0 5px;
  button:nth-child(3) { margin-left: auto; }
`;
const TsHelp = styled.button`
  width: 14px;
  height: 14px;
  background: #fff;
  color: #20242e;
  font-weight: 800;
  line-height: 14px;
  text-align: center;
`;
const ViewSelect = styled.label`
  height: 21px;
  display: flex;
  align-items: center;
  padding: 0 4px 0 1px;
  background: #e1e1e2;
  select { color: #1d1e22; }
`;
const TreeBox = styled.div`
  height: 573px;
  margin-top: 3px;
  padding-top: 1px;
  background: #fff;
  border: solid #9a9ca2;
  border-width: 0 1px 1px;
  display: flex;
  flex-direction: column;
`;
const TreeList = styled.ul`
  flex: 1;
`;
const TreeRow = styled.li`
  height: 20px;
  display: flex;
  align-items: center;
  padding-left: 4px;
  svg { margin: 0 7px 0 2px; }
`;
const Guide = styled.span`
  width: 19px;
  height: 20px;
  flex: none;
  position: relative;
  display: grid;
  place-items: center;
  &::before {
    content: "";
    position: absolute;
    left: 9px;
    top: ${(p) => (p.$v === "bottom" ? 10 : 0)}px;
    height: ${(p) => (p.$v === "full" ? 20 : p.$v ? 10 : 0)}px;
    border-left: 1px dotted #8b8d92;
  }
  &::after {
    content: "";
    position: absolute;
    left: 10px;
    right: 0;
    top: 10px;
    border-top: ${(p) => (p.$h ? "1px dotted #8b8d92" : "0")};
  }
`;
const Expander = styled.button`
  position: relative;
  z-index: 1;
  width: 9px;
  height: 9px;
  border: 1px solid #8f949e;
  background:
    linear-gradient(#35466e, #35466e) center / 5px 1px no-repeat,
    linear-gradient(#35466e, #35466e) center / 1px ${(p) => (p.$open ? 0 : 5)}px no-repeat,
    #fff;
`;
const NodeName = styled.button`
  color: #1a1b1f;
  font-weight: ${(p) => (p.$b ? 700 : 400)};
`;
const HScroll = styled.div`
  height: 15px;
  margin-bottom: 2px;
  display: grid;
  grid-template-columns: 18px 130px 1fr 18px;
  background: #f0f0f0;
  button { display: grid; place-items: center; }
`;
const Thumb = styled.span`
  background: #cbcbcb;
`;
const Preview = styled.div`
  flex: 1;
  margin-top: 7px;
  border: 1px solid #a5a9b4;
`;
const SideTabs = styled.nav`
  display: flex;
  flex-direction: column;
  padding-top: 22px;
`;
const SideTab = styled.button`
  height: 121px;
  width: ${(p) => p.$w || 19}px;
  padding-right: 2px;
  writing-mode: vertical-rl;
  transform: rotate(180deg);
  text-align: center;
  color: ${(p) => (p.$on ? c.text : c.dim)};
  background: ${(p) => (p.$on ? c.panel : c.head)};
  border: 1px solid ${c.line};
  border-radius: 2px;
`;

/* ---------- canvas ---------- */
const Canvas = styled.section`
  flex: 1;
  min-width: 0;
  position: relative;
  background: ${c.canvas};
  overflow: hidden;
`;
const ViewLabel = styled.div`
  position: absolute;
  left: 3px;
  top: 6px;
`;
const WinButtons = styled.div`
  position: absolute;
  right: 10px;
  top: 9px;
  display: flex;
  gap: 8px;
`;
const Drawing = styled.svg`
  position: absolute;
  left: ${(p) => p.$x}px;
  top: ${(p) => p.$y}px;
`;
const Cube = styled.div`
  position: absolute;
  right: 15px;
  top: 39px;
  width: 136px;
  height: 134px;
  display: grid;
  grid-template: ". n ." 20px "w f e" 1fr ". s ." 20px / 22px 1fr 22px;
  place-items: center;
  &::before {
    content: "";
    position: absolute;
    left: 8px;
    top: 7px;
    width: 120px;
    height: 120px;
    border-radius: 50%;
    border: 13px solid #414651;
  }
`;
const Compass = styled.span`
  grid-area: ${(p) => p.$at};
  position: relative;
  color: #b4b6ba;
  font: 700 20px/20px "Liberation Sans", sans-serif;
`;
const CubeFace = styled.button`
  grid-area: f;
  position: relative;
  width: 52px;
  height: 52px;
  background: #b2b3b4;
  display: grid;
  place-items: center;
  b {
    width: 32px;
    height: 32px;
    background: #a2a7ad;
    color: #4a4e58;
    font: 700 11px/32px "Noto Sans", sans-serif;
    text-align: center;
  }
`;
const Wcs = styled.button`
  position: absolute;
  right: 59px;
  top: 193px;
  width: 48px;
  height: 18px;
  padding: 0 4px;
  display: flex;
  align-items: center;
  justify-content: space-between;
  background: #a3a5ad;
  border: 1px solid #c0c1c6;
  border-radius: 4px;
  color: #585b66;
  font-family: "Liberation Sans", sans-serif;
`;
const NavBar = styled.div`
  position: absolute;
  right: 4px;
  top: 236px;
  width: 32px;
  height: 212px;
  background: #5a6063;
  border-radius: 3px;
`;
const Tip = styled.table`
  position: absolute;
  left: 733px;
  top: 254px;
  width: 270px;
  height: 46px;
  padding: 0 8px 4px 34px;
  border-spacing: 0;
  table-layout: fixed;
  background: #f1f1f4;
  border: 1px solid #8e9095;
  td { padding: 0; color: #56585e; }
  td:nth-child(1) { width: 75px; }
  td:nth-child(2) { width: 31px; }
  td:last-child { text-align: right; }
`;
const Command = styled.div`
  position: absolute;
  left: 2px;
  bottom: 1px;
  width: 825px;
  display: grid;
  grid-template: 44px 20px / 23px 1fr;
`;
const CmdTools = styled.div`
  grid-row: 1 / 3;
  background: #2f3340;
  display: flex;
  flex-direction: column;
  align-items: center;
  padding: 4px 4px 0 0;
  gap: 8px;
`;
const History = styled.pre`
  margin: 0 0 1px;
  padding: 12px 2px 0;
  background: #939596;
  color: #101114;
  font: 12px/15px "DejaVu Sans Mono", monospace;
`;
const CmdLine = styled.label`
  display: flex;
  align-items: center;
  gap: 3px;
  padding: 0 5px 0 4px;
  background: #b0b2b5;
  input {
    flex: 1;
    border: 0;
    padding: 0 2px;
    background: none;
    font: italic 12px/16px "DejaVu Sans Mono", monospace;
  }
  input::placeholder { color: #5b5d62; opacity: 1; }
`;
const DarkCaret = styled.span`
  border: 4px solid transparent;
  ${(p) => (p.$up ? "border-bottom-color: #55575d; border-top: 0;" : "border-top-color: #55575d; border-bottom: 0;")}
`;

/* ---------- right docks ---------- */
const ToolColumn = styled.div`
  flex: none;
  width: 24px;
  margin: 0 6px 0 4px;
  align-self: flex-start;
`;
const ToolGroup = styled.div`
  display: flex;
  flex-direction: column;
  align-items: center;
  border: 1px solid ${c.line};
  button { height: 22px; display: grid; place-items: center; }
`;
const GripRow = styled.div`
  height: ${(p) => p.$h}px;
  display: grid;
  place-items: center;
`;
const Rule = styled.hr`
  width: 19px;
  height: 2px;
  margin: 2px 0;
  border: 0;
  background: #e6e8eb;
`;
const RightDock = styled.aside`
  flex: none;
  width: 296px;
  display: grid;
  grid-template-columns: 21px 1fr;
  align-items: start;
  padding-top: 2px;
`;
const PickRow = styled.div`
  display: flex;
  align-items: center;
  gap: 9px;
  padding: 13px 0 0 5px;
  button { display: block; }
`;
const PickSelect = styled.label`
  width: 186px;
  height: 23px;
  display: flex;
  align-items: center;
  padding: 0 3px 2px;
  background: ${c.field};
  border: 1px solid #333949;
`;
const Sections = styled.div`
  padding: 3px 19px 0 10px;
`;
const SectionHead = styled.button`
  width: 100%;
  height: 19px;
  display: flex;
  align-items: center;
  justify-content: space-between;
  padding: 0 7px;
  background: ${c.head};
  font-weight: 700;
`;
const Props = styled.table`
  width: 229px;
  margin: 0 0 4px 17px;
  border-spacing: 0;
  table-layout: fixed;
  border-left: 1px solid ${c.line};
  border-right: 1px solid ${c.line};
  th {
    width: 104px;
    padding: 0 4px 0 7px;
    text-align: left;
    font-weight: 400;
    white-space: nowrap;
    color: #d0d3d9;
    border-bottom: 1px solid ${c.line};
    border-right: 1px solid ${c.line};
  }
  td { padding: 0 3px; border-bottom: 1px solid ${c.line}; }
  th, td { height: 19px; line-height: 18px; }
`;
const Value = styled.span`
  display: flex;
  align-items: center;
  gap: 6px;
  color: ${(p) => (p.$m ? c.mute : c.text)};
  font-size: ${(p) => (p.$n ? 12 : 11)}px;
`;
const Stroke = styled.span`
  width: 55px;
  height: 1px;
  background: ${c.text};
`;

/* ---------- footer ---------- */
const Footer = styled.footer`
  height: 28px;
  display: flex;
  justify-content: space-between;
  border-top: 1px solid #3a3f4d;
`;
const LayoutTabs = styled.nav`
  display: flex;
  align-items: flex-start;
  padding-left: 13px;
  gap: 4px;
`;
const LayoutTab = styled.button`
  height: 17px;
  padding: 0 10px 1px;
  border-radius: 0 0 7px 7px;
  background: ${(p) => (p.$on ? c.panel : "#2b303d")};
  color: ${(p) => (p.$on ? "#fff" : c.dim)};
  font-weight: ${(p) => (p.$on ? 700 : 400)};
`;
const Status = styled.div`
  display: flex;
  gap: 2px;
  padding: 1px 4px 2px 0;
`;
const Group = styled.div`
  display: grid;
  grid-template-columns: ${(p) => p.$cols};
  align-items: center;
  justify-items: center;
  height: 24px;
  background: #383e4f;
`;
const Lit = styled.button`
  width: 22px;
  height: 22px;
  display: grid;
  place-items: center;
  background: #5c8dc4;
`;
const StatusText = styled.button`
  font-size: 12px;
`;
const TaskEdge = styled.div`
  height: 2px;
  padding-left: 48px;
  background: #1b1c26;
  &::before { content: ""; display: block; width: 344px; height: 2px; background: #e4e5e8; }
`;

/* ---------- content ---------- */
const menuTabs = ["Home", "Insert", "Annotate", "Modify", "Analyze", "View", "Manage", "Output", "Survey", "Rail", "Transparent", "InfraWorks", "Collaborate", "Help", "Add-ins", "Express Tools", "Featured Apps"];

const tree = [
  ["doc", "Open Drawings", [["bottom", "-"]]],
  ["doc", "Plan Production-View Frames-Create", [["full"], ["top", "-"]], true],
  ["tPoint", "Points", [["full"], [], ["full", "h"]]],
  ["tPointGroup", "Point Groups", [["full"], [], ["full", "h"]]],
  ["tSurface", "Surfaces", [["full"], [], ["full", "+"]]],
  ["tAlign", "Alignments", [["full"], [], ["full", "+"]]],
  ["tFeature", "Feature Lines", [["full"], [], ["full", "h"]]],
  ["tSites", "Sites", [["full"], [], ["full", "+"]]],
  ["tCatch", "Catchments", [["full"], [], ["full", "h"]]],
  ["tPipe", "Pipe Networks", [["full"], [], ["full", "+"]]],
  ["tPipe", "Pressure Networks", [["full"], [], ["full", "h"]]],
  ["tCorr", "Corridors", [["full"], [], ["full", "h"]]],
  ["tAssembly", "Assemblies", [["full"], [], ["full", "+"]]],
  ["tInter", "Intersections", [["full"], [], ["full", "h"]]],
  ["tSurvey", "Survey", [["full"], [], ["full", "+"]]],
  ["tView", "View Frame Groups", [["full"], [], ["top", "h"]]],
  ["tShort", "Data Shortcuts [C:\\Users\\Public\\Documents\\...", [["full", "-"]]],
  ["tSurfaceS", "Surfaces", [["full"], ["full", "+"]]],
  ["tAlignS", "Alignments", [["full"], ["full", "+"]]],
  ["tPipeS", "Pipe Networks", [["full"], ["full", "h"]]],
  ["tPipeS", "Pressure Networks", [["full"], ["full", "h"]]],
  ["tCorrS", "Corridors", [["full"], ["full", "h"]]],
  ["tViewS", "View Frame Groups", [["full"], ["top", "h"]]],
  ["tDwt", "Drawing Templates", [["top", "+"]]],
];

const sections = [
  ["General", [["Color", "ByLayer", "swatch"], ["Layer", "0", "num"], ["Linetype", "ByLayer", "line"], ["Linetype scale", "1.0000", "num"], ["Lineweight", "ByLayer", "line"], ["Transparency", "ByLayer"], ["Thickness", "0.0000", "num"]]],
  ["3D Visualization", [["Material", "ByLayer"]]],
  ["Plot style", [["Plot style", "ByColor", "mute"], ["Plot style table", "None"], ["Plot table attac...", "Model", "mute"], ["Plot table type", "Not available", "mute"]]],
  ["View", [["Center X", "981512.2162", "num mute"], ["Center Y", "182367.0980", "num mute"], ["Center Z", "0.0000", "num mute"], ["Height", "21377.2534", "num mute"], ["Width", "30821.3140", "num mute"]]],
  ["Misc", [["Annotation scale", "1\" = 40'", "num"], ["UCS icon On", "Yes"], ["UCS icon at ori...", "No"], ["UCS per viewport", "Yes"], ["UCS Name", ""], ["Visual Style", "2D Wireframe"]]],
];

const columnTools = ["rCorner", "rAngle", "rArcL", "rWedge", "rSheet", "rGlobeT", "rGlobe", "rPtGrid", "rPtA", "rPtSel", "rPtZoom", "rSel", "rProf", "-", "rFilter", "-", "rCurve", "rSurfC", "rPtC", "-", "rD1", "rD2", "rD3", "rD4", "rD5", "rD6", "rD7"];

const T = ({ i, children, menu }) => (
  <Tool>
    <Ico n={i} />
    <span>{children}</span>
    {menu && <Caret />}
  </Tool>
);
const IconTool = ({ i, menu }) => (
  <Tool aria-label={i}>
    <Ico n={i} />
    {menu && <Caret />}
  </Tool>
);
const Btn = ({ i, s, label }) => (
  <button aria-label={label || i}>
    <Ico n={i} s={s} />
  </button>
);
const RibbonPanel = ({ w, cols, l, name, menu, children }) => (
  <Panel $w={w}>
    <PanelBody $cols={cols} $l={l}>{children}</PanelBody>
    <PanelName>
      {name}
      {menu && <Caret $big />}
    </PanelName>
  </Panel>
);

function TopRibbon() {
  return (
    <Ribbon>
      <RibbonPanel w={112} cols="59px 24px 24px" l={2} name="Palettes" menu>
        <Big $on>
          <Ico n="toolspace" s={32} />
          <span>Toolspace</span>
        </Big>
        <Square $on aria-label="Prospector"><Ico n="prospector" /></Square>
        <Square $on aria-label="Survey"><Ico n="survey" /></Square>
        <Square aria-label="Sheet set"><Ico n="sheetSet" /></Square>
        <Square $on aria-label="Settings"><Ico n="gearTool" /></Square>
        <Square $on aria-label="Toolbox"><Ico n="toolbox" /></Square>
        <Square aria-label="Properties"><Ico n="design" /></Square>
      </RibbonPanel>
      <RibbonPanel w={129} cols="1fr" l={26} name="Create Ground Data" menu>
        <T i="points" menu>Points</T>
        <T i="surfaces" menu>Surfaces</T>
        <T i="traverse" menu>Traverse</T>
      </RibbonPanel>
      <RibbonPanel w={322} cols="106px 97px 1fr" l={7} name="Create Design" menu>
        <T i="parcel" menu>Parcel</T>
        <T i="feature" menu>Feature Line</T>
        <T i="grading" menu>Grading</T>
        <T i="alignment" menu>Alignment</T>
        <T i="profile" menu>Profile</T>
        <T i="corridor" menu>Corridor</T>
        <T i="intersections" menu>Intersections</T>
        <T i="assembly" menu>Assembly</T>
        <T i="pipe" menu>Pipe Network</T>
      </RibbonPanel>
      <RibbonPanel w={133} cols="1fr" l={13} name="Profile & Section Views">
        <T i="profileView" menu>Profile View</T>
        <T i="sampleLines">Sample Lines</T>
        <T i="sectionViews" menu>Section Views</T>
      </RibbonPanel>
      <RibbonPanel w={118} cols="36px 40px 1fr" l={7} name="Draw" menu>
        <IconTool i="line" menu />
        <IconTool i="lineCreate" menu />
        <IconTool i="curve" menu />
        <IconTool i="arc" menu />
        <IconTool i="circle" menu />
        <IconTool i="ellipse" menu />
        <IconTool i="polyline" />
        <IconTool i="rect" menu />
        <IconTool i="hatch" menu />
      </RibbonPanel>
      <RibbonPanel w={250} cols="72px 69px 75px 1fr" l={7} name="Modify" menu>
        <T i="move">Move</T>
        <T i="copy">Copy</T>
        <T i="stretch">Stretch</T>
        <T i="rotate">Rotate</T>
        <T i="mirror">Mirror</T>
        <T i="scale">Scale</T>
        <T i="trim" menu>Trim</T>
        <T i="fillet" menu>Fillet</T>
        <T i="array" menu>Array</T>
        <IconTool i="erase" />
        <IconTool i="explode" />
        <IconTool i="offset" />
      </RibbonPanel>
      <RibbonPanel w={273} cols="62px 1fr" name="Layers" menu>
        <Big>
          <Ico n="layerProps" s={34} />
          <span>Layer Properties</span>
        </Big>
        <Layers>
          <LayerCombo>
            <Ico n="bulb" />
            <Ico n="sun" />
            <Ico n="unlock" />
            <Swatch $s={14} />
            <PlainSelect aria-label="Layer" defaultValue="0"><option>0</option></PlainSelect>
            <Caret $big />
          </LayerCombo>
          <LayerRow>
            <Btn i="layOff" /><Btn i="layIso" /><Btn i="layFreeze" /><Btn i="layLock" />
            <T i="makeCurrent">Make Current</T>
          </LayerRow>
          <LayerRow>
            <Btn i="layOn" /><Btn i="layUniso" /><Btn i="layThaw" /><Btn i="layUnlock" />
            <T i="matchLayer">Match Layer</T>
          </LayerRow>
        </Layers>
      </RibbonPanel>
      <RibbonPanel w={80} cols="56px 1fr" name="Clipboard">
        <Big>
          <Ico n="paste" s={34} />
          <span>Paste</span>
          <Caret />
        </Big>
        <Btn i="cut" />
        <Btn i="copyClip" />
        <Btn i="matchProp" />
      </RibbonPanel>
    </Ribbon>
  );
}

function Toolspace() {
  return (
    <LeftDock>
      <Column>
        <PaletteHead><Grip />TOOLSPACE</PaletteHead>
        <TsBar>
          <Btn i="tsNew" s={14} />
          <Btn i="refresh" s={14} />
          <Btn i="tsTree" />
          <Btn i="tsPano" s={15} />
          <TsHelp>?</TsHelp>
        </TsBar>
        <ViewSelect>
          <PlainSelect aria-label="View" defaultValue="m"><option value="m">Master View</option></PlainSelect>
          <svg width="10" height="6" viewBox="0 0 10 6">{ln("M1 1l4 4 4-4", "#44464c", 1.2)}</svg>
        </ViewSelect>
        <TreeBox>
          <TreeList>
            {tree.map(([icon, name, guides, bold], i) => (
              <TreeRow key={i}>
                {guides.map(([v, h], k) => (
                  <Guide key={k} $v={v} $h={!!h}>
                    {(h === "+" || h === "-") && <Expander $open={h === "-"} aria-label={`Toggle ${name}`} />}
                  </Guide>
                ))}
                <Ico n={icon} />
                <NodeName $b={bold}>{name}</NodeName>
              </TreeRow>
            ))}
          </TreeList>
          <HScroll>
            <button aria-label="Scroll left"><svg width="6" height="8" viewBox="0 0 6 8">{ln("M5 0L1 4l4 4", "#44464c", 1.6)}</svg></button>
            <Thumb />
            <span />
            <button aria-label="Scroll right"><svg width="6" height="8" viewBox="0 0 6 8">{ln("M1 0l4 4-4 4", "#44464c", 1.6)}</svg></button>
          </HScroll>
        </TreeBox>
        <Preview />
      </Column>
      <SideTabs>
        {["Prospector", "Settings", "Survey", "Toolbox"].map((t, i) => (
          <SideTab key={t} $on={i === 0}>{t}</SideTab>
        ))}
      </SideTabs>
    </LeftDock>
  );
}

/* Site plan and its profile grid, drawn at three units to the pixel. */
const road = "M136 178L160 208L162 305L180 330L205 348L245 402L270 409L310 398L380 376L410 347L425 310L449 245L448 185L435 165L388 145L368 95L340 66";
const spine = "M166 303L196 302L262 346L290 354L350 341L372 352L378 370";
const lots = [[186, 279], [222, 300], [266, 326], [311, 323], [354, 309], [387, 338], [195, 323], [225, 344], [258, 375], [302, 375], [345, 361]];

function SitePlan() {
  const xs = Array.from({ length: 17 }, (_, i) => 186 + i * 17);
  const ys = Array.from({ length: 8 }, (_, i) => 544 + i * 17);
  return (
    <Drawing $x={454} $y={387} width="200" height="240" viewBox="0 0 600 720">
      <g fill="none" strokeWidth="3">
        <path d="M110 191L168 155L172 205L205 255L215 290L246 308H288L330 288L296 162L317 135L323 82L355 57L439 124L505 142V345L430 438L283 487L217 478L150 380L100 238z" stroke="#1f8a2b" />
        <path d="M162 262L208 258L216 285L248 309H290L330 290L360 279L413 333L378 372" stroke="#2677c9" strokeWidth="4" />
        <path d="M216 290L248 309H290L330 290" stroke="#1f9c8a" />
        <path d="M162 308L205 345L245 400" stroke="#2677c9" />
        <path d="M208 280L196 302M246 310L240 332M290 310L284 352M331 290L334 342M382 306L366 344M206 322L202 345M242 345L232 382M286 360L280 400M320 352L326 386M180 306L170 315" stroke="#c02cd6" strokeWidth="4" />
        <path d={road} stroke="#e01f2b" strokeWidth="8" />
        <path d={road} stroke="#f49a9a" strokeWidth="4" strokeDasharray="3 8" />
        <path d={spine} stroke="#e8434d" strokeWidth="6" />
        <path d={spine} stroke="#f7b3ae" strokeWidth="9" strokeDasharray="3 7" />
      </g>
      {lots.map(([x, y]) => (
        <path key={x} d={`M${x - 10} ${y - 3}h20l-5 7h-10z`} fill="#12b322" />
      ))}
      <rect x="300" y="516" width="27" height="10" fill="#f28686" />
      <g fill="none" strokeWidth="2">
        {xs.map((x) => <path key={x} d={`M${x} 528V664`} stroke="#8e918c" />)}
        {ys.map((y) => <path key={y} d={`M168 ${y}H458`} stroke="#8e918c" />)}
        <path d="M187 528V664M206 528V664M230 528V664M307 528V664M380 528V664M417 528V664M435 528V664M455 528V664" stroke="#1717d4" strokeWidth="4" />
        <path d="M168 527H460V665H168z" stroke="#2020c8" strokeWidth="5" />
        <path d="M166 526H460V666H166z" stroke="#f08c96" strokeWidth="4" strokeDasharray="7 11" />
        <path d="M190 606C230 595 250 615 300 616M362 597h36M412 606h12" stroke="#2b8fd8" strokeWidth="3" />
        <path d="M195 610C225 618 260 622 292 620" stroke="#c61ef0" strokeWidth="7" />
        <path d="M185 614C215 600 235 598 260 601C300 600 295 616 315 619C350 612 370 580 398 572C415 577 420 595 432 610" stroke="#d92430" strokeWidth="4" />
      </g>
    </Drawing>
  );
}

function Viewport() {
  return (
    <Canvas>
      <ViewLabel>[−][Top][2D Wireframe]</ViewLabel>
      <WinButtons>
        <button aria-label="Minimise view"><svg width="12" height="12" viewBox="0 0 12 12">{fl("M1 7h9v3H1z", "#fff")}</svg></button>
        <button aria-label="Restore view"><svg width="12" height="12" viewBox="0 0 12 12">{ln("M1.500 4h6v6h-6zM4 1.500h6.500V8", "#fff", 1.8)}</svg></button>
        <button aria-label="Close view"><svg width="12" height="12" viewBox="0 0 12 12">{ln("M2 2l8 8M10 2l-8 8", "#fff", 2.2)}</svg></button>
      </WinButtons>
      <SitePlan />
      <Drawing $x={668} $y={188} width="98" height="98" viewBox="0 0 98 98">
        {ln("M49.500 0v45M49.500 52v46M1 48.500h45M53 48.500h45", "#e8e9eb")}
        {ln("M46.500 45.500h6v6h-6z", "#e8e9eb")}
      </Drawing>
      <Tip>
        <tbody>
          <tr><td>Maple Road</td><td>SO</td><td>38+30.02'</td><td>4216.878'</td></tr>
          <tr><td>Oak Road</td><td>SO</td><td>12+74.99'</td><td>-5366.257'</td></tr>
        </tbody>
      </Tip>
      <Cube>
        <Compass $at="n">N</Compass>
        <Compass $at="w">W</Compass>
        <CubeFace><b>TOP</b></CubeFace>
        <Compass $at="e">E</Compass>
        <Compass $at="s">S</Compass>
      </Cube>
      <Wcs>WCS <svg width="8" height="5" viewBox="0 0 8 5">{ln("M0 1h8L4 4z", "#b9bac0")}</svg></Wcs>
      <NavBar>
        <svg width="32" height="212" viewBox="0 0 32 212">
          <g fill="none" stroke="#41464a" strokeWidth="1">
            <circle cx="26" cy="5" r="3" />
            <path d="M16 20h10v14l-6 6h-8a10 10 0 0 1 4-20z" />
            <circle cx="16" cy="30" r="7" /><circle cx="16" cy="30" r="4" />
            <path d="M10 84c-2-6-6-8-5-10s4 1 5 2l-2-9c1-2 3-1 3 1l1 5 1-9c1-2 3-1 3 0v9l2-8c1-1 3-1 3 1l-1 9 3-5c1-1 3 0 2 2l-4 12z" />
            <path d="M5 90l13 14M20 90L5 104M5 94v-4h4M16 90h4v4M5 100v4h4" />
            <circle cx="20" cy="104" r="5" /><path d="M23 108l5 5" strokeWidth="2" />
            <path d="M14 130h4v18h-4zM13 136c-8 2-8 6 0 7M19 136c9 2 9 6-1 7M11 140l3 3-3 3" />
            <path d="M4.500 169.500h6v6h-6zM12.500 169.500h6v6h-6zM20.500 169.500h6v6h-6zM4.500 178.500h16v13h-16z" />
            <circle cx="26" cy="206" r="3" />
          </g>
          <path d="M9 181l8 4-8 4zM14 49h4l-2 2zM14 119h4l-2 2zM14 157h4l-2 2z" fill="#41464a" />
        </svg>
      </NavBar>
      <Command>
        <CmdTools>
          <Grip $w={17} $h={5} />
          <button aria-label="Close command line"><svg width="10" height="10" viewBox="0 0 10 10">{ln("M1 1l8 8M9 1L1 9", "#b9bdc6", 2.2)}</svg></button>
          <button aria-label="Customize"><svg width="14" height="14" viewBox="0 0 14 14">{ln("M1 13l7-7", "#b9bdc6", 2.4)}{ln("M8 1c-1 3 2 6 5 5", "#b9bdc6", 2.2)}</svg></button>
        </CmdTools>
        <History>{"Command:\nCommand: _SAVEAS"}</History>
        <CmdLine>
          <svg width="16" height="12" viewBox="0 0 16 12">
            <rect x=".5" y=".5" width="15" height="11" fill="#a5a7aa" stroke="#55575d" />
            {fl("M0 0h16v3H0z", "#55575d")}
            {ln("M3 5l2 2-2 2M7 9.500h4", "#55575d")}
          </svg>
          <DarkCaret />
          <input aria-label="Command" placeholder="Type a command" />
          <DarkCaret $up />
        </CmdLine>
      </Command>
      <Drawing $x={16} $y={787} width="76" height="74" viewBox="0 0 76 74">
        {ln("M7 1l6 6 6-6M13 7v7M5.500 18v6", "#e8e9eb", 1.2)}
        {ln("M5.500 24v38M.5 63.500h9v8h-9z", "#a7a9af")}
        {ln("M60 54l12 12M72 54L60 66", "#c9cacc")}
      </Drawing>
    </Canvas>
  );
}

function Properties() {
  return (
    <RightDock>
      <SideTabs>
        {["Design", "Display", "Extended Data", "Object Class"].map((t, i) => (
          <SideTab key={t} $w={21} $on={i === 0}>{t}</SideTab>
        ))}
      </SideTabs>
      <Column>
        <PaletteHead><Grip />PROPERTIES</PaletteHead>
        <PickRow>
          <PickSelect>
            <PlainSelect aria-label="Selection" defaultValue="n"><option value="n">No selection</option></PlainSelect>
            <Caret $big />
          </PickSelect>
          <Btn i="pickAdd" /><Btn i="pickObj" s={14} /><Btn i="quickSel" />
        </PickRow>
        <Sections>
          {sections.map(([name, rows]) => (
            <React.Fragment key={name}>
              <SectionHead>{name}<Caret $big /></SectionHead>
              <Props>
                <tbody>
                  {rows.map(([label, value, kind = ""]) => (
                    <tr key={label}>
                      <th scope="row">{label}</th>
                      <td>
                        <Value $m={kind.includes("mute")} $n={kind.includes("num")}>
                          {kind === "swatch" && <Swatch $s={11} />}
                          {kind === "line" && <Stroke />}
                          {value}
                        </Value>
                      </td>
                    </tr>
                  ))}
                </tbody>
              </Props>
            </React.Fragment>
          ))}
        </Sections>
      </Column>
    </RightDock>
  );
}

export default function App() {
  return (
    <App_>
      <Global />
      <Header>
        <Logo aria-label="Application menu">
          <svg viewBox="0 0 38 40">
            <path d="M28 5C20 0 8 4 7 14s9 17 19 12l-1-5c-6 3-12 0-11-6s7-8 11-5z" fill="#2b9fd6" />
            <path d="M28 5C22 1 12 4 10 9c5-4 12-3 15 1z" fill="#7fd2f2" />
            <path d="M8 19c2 8 11 11 18 7l-1-5c-6 3-12 1-17-2z" fill="#16689f" />
            <path d="M30 18h6l-3 3z" fill="#26292f" />
          </svg>
          <LogoName>C3D</LogoName>
        </Logo>
        <TitleBar>
          <Quick>
            <Btn i="newDoc" label="New" /><Btn i="open" label="Open" /><Btn i="save" label="Save" />
            <Btn i="openMobile" label="Open from mobile" /><Btn i="saveMobile" label="Save to mobile" />
            <Btn i="print" label="Plot" /><Btn i="undo" label="Undo" /><Caret />
            <Btn i="redo" label="Redo" /><Caret /><Btn i="custom" s={12} label="Customize" />
          </Quick>
          <Title><span>Autodesk Civil 3D 2020</span><span>Plan Production-View Frames-Create.dwg</span></Title>
          <Account>
            <RightArrow />
            <Search aria-label="Search" placeholder="Type a keyword or phrase" />
            <Btn i="binoc" s={14} label="Search" />
            <Btn i="user" s={14} label="Account" />
            <SignIn href="#">Sign In</SignIn>
            <Caret />
            <Btn i="cart" s={14} label="Cart" />
            <Btn i="a360" s={14} label="Apps" />
            <Caret />
            <Divider />
            <Help>?</Help>
            <Caret />
            <span />
            <Btn i="min" s={13} label="Minimise" />
            <Btn i="restore" s={13} label="Restore" />
            <Btn i="close" s={15} label="Close" />
          </Account>
        </TitleBar>
        <Tabs>
          {menuTabs.map((t, i) => <Tab key={t} $on={i === 0}>{t}</Tab>)}
          <RibbonToggle aria-label="Minimise ribbon"><Pill /><Caret /></RibbonToggle>
        </Tabs>
      </Header>
      <TopRibbon />
      <Files>
        <FileTab $w={122}><button>Start</button></FileTab>
        <FileTab $w={238} $on><button>Plan Production-View Frames-Create</button><CloseX>×</CloseX></FileTab>
        <AddTab>+</AddTab>
      </Files>
      <Main>
        <Toolspace />
        <Viewport />
        <ToolColumn>
          <ToolGroup>
            <GripRow $h={9}><Grip $w={13} $h={3} $bg={c.panel} /></GripRow>
            {columnTools.map((n, i) => (n === "-" ? <Rule key={i} /> : <Btn key={i} i={n} />))}
          </ToolGroup>
          <ToolGroup>
            <GripRow $h={10}><Grip $w={13} $h={3} $bg={c.panel} /></GripRow>
            <Btn i="rFilter" /><Btn i="rF2" /><Btn i="rF3" />
          </ToolGroup>
        </ToolColumn>
        <Properties />
      </Main>
      <Footer>
        <LayoutTabs>
          <LayoutTab $on>Model</LayoutTab>
          <LayoutTab>Layout1</LayoutTab>
          <LayoutTab>Layout2</LayoutTab>
          <LayoutTab>+</LayoutTab>
        </LayoutTabs>
        <Status>
          <Group $cols="47px 30px 22px 14px"><StatusText>MODEL</StatusText><Btn i="sGrid" /><Btn i="sSnap" s={15} /><Caret /></Group>
          <Group $cols="24px 26px 16px 22px 14px"><Btn i="sOrtho" /><Btn i="sPolar" /><Caret /><Btn i="sIso" s={14} /><Caret /></Group>
          <Group $cols="24px 26px 14px"><Btn i="sTrack" /><Btn i="sSnap2" /><Caret /></Group>
          <Group $cols="24px 24px 24px 48px 12px"><Lit aria-label="Annotation visibility"><Ico n="sAnno" /></Lit><Btn i="sAnno2" s={15} /><Btn i="sAnno3" s={15} /><StatusText>1" = 40'</StatusText><Caret /></Group>
          <Group $cols="26px 14px"><Btn i="gear" s={15} /><Caret /></Group>
          <Group $cols="26px"><Btn i="sPlus" /></Group>
          <Group $cols="26px 48px"><Btn i="sLayers" s={15} /><StatusText>3.5000</StatusText></Group>
          <Group $cols="25px"><Btn i="sShapes" /></Group>
          <Group $cols="24px 24px"><Btn i="sHw" /><Btn i="sWarn" /></Group>
          <Group $cols="24px 24px"><Btn i="sClean" s={14} /><Btn i="sMenu" /></Group>
        </Status>
      </Footer>
      <TaskEdge />
    </App_>
  );
}
